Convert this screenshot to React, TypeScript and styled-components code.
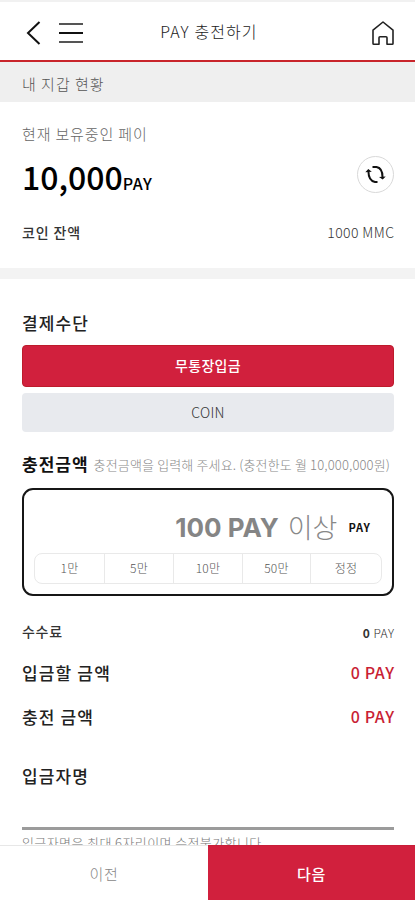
import React from 'react';
import styled, { createGlobalStyle } from 'styled-components';

const Global = createGlobalStyle`
  * { box-sizing: border-box; }
  body { margin: 0; background: #fff; }
  button { font: inherit; border: 0; padding: 0; margin: 0; background: none; color: inherit; }
`;

const Screen = styled.div`
  width: 415px;
  height: 900px;
  display: flex;
  flex-direction: column;
  overflow: hidden;
  background: #fff;
  color: #222;
  font-family: 'Noto Sans CJK KR', sans-serif;
`;

const Header = styled.header`
  flex: none;
  height: 62px;
  border-top: 2px solid #f1f1f1;
  border-bottom: 2px solid #c9252b;
  padding: 0 20px 0 26px;
  display: grid;
  grid-template-columns: 76px 1fr 76px;
  align-items: center;
`;

const HeaderIcons = styled.div<{ $end?: boolean }>`
  display: flex;
  align-items: center;
  gap: 18px;
  padding-top: 4px;
  justify-content: ${p => (p.$end ? 'flex-end' : 'flex-start')};
  svg { display: block; }
`;

const Text = styled.span<{ $size: number; $weight?: number; $color?: string; $spacing?: number }>`
  font-size: ${p => p.$size}px;
  font-weight: ${p => p.$weight ?? 400};
  color: ${p => p.$color ?? '#333'};
  letter-spacing: ${p => p.$spacing ?? 0}px;
  margin-right: ${p => -(p.$spacing ?? 0)}px;
  line-height: 1.2;
  white-space: nowrap;
`;

const Title = styled.h1`
  margin: 0;
  text-align: center;
  font-size: 16px;
  font-weight: 300;
  color: #222;
  letter-spacing: 1.1px;
  padding: 0 3px 1px 0;
`;

const SubHeader = styled.div`
  flex: none;
  height: 40px;
  padding: 3px 22px 0;
  display: flex;
  align-items: center;
  background: #efefef;
`;

const Main = styled.main`
  flex: 1;
  min-height: 0;
  overflow: hidden;
`;

const Wallet = styled.section`
  height: 177px;
  padding: 22px 21px 0 22px;
  border-bottom: 11px solid #f3f3f3;
`;

const Row = styled.div<{ $h: number }>`
  height: ${p => p.$h}px;
  display: flex;
  align-items: center;
  justify-content: space-between;
`;

const Balance = styled.div`
  display: flex;
  align-items: baseline;
  padding-bottom: 2px;
`;

const RefreshButton = styled.button`
  width: 37px;
  height: 37px;
  margin-top: -7px;
  border: 1px solid #d9d9d9;
  border-radius: 50%;
  display: flex;
  align-items: center;
  justify-content: center;
`;

const Form = styled.section`
  padding: 26px 21px 0 22px;
`;

const Method = styled.button<{ $active?: boolean }>`
  display: block;
  width: 100%;
  height: ${p => (p.$active ? 42 : 39)}px;
  border-radius: 4px;
  border: ${p => (p.$active ? '1px solid #bd1b2b' : '0')};
  background: ${p => (p.$active ? '#d1203d' : '#e8eaee')};
  color: ${p => (p.$active ? '#fff' : '#333')};
  font-size: 14px;
  font-weight: ${p => (p.$active ? 500 : 300)};
  letter-spacing: 0.3px;
  padding-bottom: 2px;
  margin-bottom: 6px;
`;

const AmountHeading = styled.div`
  height: 50px;
  padding-top: 3px;
  display: flex;
  align-items: center;
  gap: 6px;
`;

const AmountBox = styled.div`
  height: 108px;
  border: 2px solid #161616;
  border-radius: 11px;
  padding: 14px 10px 0;
`;

const AmountField = styled.div`
  height: 49px;
  padding: 0 12px 2px;
  display: flex;
  justify-content: flex-end;
  align-items: center;
  gap: 11px;
`;

const Placeholder = styled.div`
  display: flex;
  align-items: center;
  gap: 9px;
  color: #858585;
  height: 42px;
`;

const Latin = styled.span`
  font: 700 26px/1 Inter, sans-serif;
  padding-top: 1px;
`;

const Presets = styled.div`
  height: 31px;
  display: grid;
  grid-template-columns: 69px 69px 69px 68px 1fr;
  border: 1px solid #e9e9e9;
  border-radius: 8px;
`;

const Preset = styled.button`
  font-size: 12px;
  font-weight: 300;
  color: #555;
  padding-bottom: 2px;
  letter-spacing: 0.2px;
  & + & { border-left: 1px solid #e9e9e9; }
`;

const NameInput = styled.div`
  height: 32px;
  border-bottom: 3px solid #9b9b9b;
`;

const Note = styled.p`
  margin: 2px 0 0;
  font-size: 13px;
  line-height: 22px;
  font-weight: 300;
  letter-spacing: 0.4px;
  color: #777;
`;

const Footer = styled.footer`
  flex: none;
  height: 55px;
  display: grid;
  grid-template-columns: 208px 1fr;
`;

const FooterButton = styled.button<{ $primary?: boolean }>`
  font-size: 15px;
  letter-spacing: 0.8px;
  font-weight: ${p => (p.$primary ? 500 : 300)};
  color: ${p => (p.$primary ? '#fff' : '#888')};
  background: ${p => (p.$primary ? '#d1203d' : '#fff')};
  border-top: 1px solid ${p => (p.$primary ? '#c81e38' : '#e7e7e7')};
`;

const BackIcon = () => (
  <svg width="15" height="24" viewBox="0 0 15 24" fill="none" stroke="#111" strokeWidth="2">
    <path d="M13.5 1 2 12l11.500 11" />
  </svg>
);

const MenuIcon = () => (
  <svg width="24" height="20" viewBox="0 0 24 20" fill="none" strokeWidth="2">
    <path d="M0 1h24M0 19h24" stroke="#555" />
    <path d="M0 10h24" stroke="#111" />
  </svg>
);

const HomeIcon = () => (
  <svg width="24" height="26" viewBox="0 0 24 26" fill="none" stroke="#222" strokeWidth="1.600" strokeLinejoin="round">
    <path d="M2 10.200 12 2l10 8.200v13.300q0 .8-.8.800h-5.200v-6.500q0-1-1-1h-6q-1 0-1 1v6.500H2.800q-.8 0-.8-.8z" />
  </svg>
);

const RefreshIcon = () => (
  <svg width="21" height="19" viewBox="0 0 21 19" fill="none" stroke="#111" strokeWidth="2">
    <path d="M7.500 2H11.500Q17.500 3 17.500 12" />
    <path d="M12.500 17H10Q3.500 15.500 3.500 7" />
    <path d="m14 12 3.700 2.600 3-3.100zM.3 7.300l3-3.300 3.500 2.800z" fill="#111" stroke="none" />
  </svg>
);

const presets = ['1만', '5만', '10만', '50만', '정정'];

export default function App() {
  return (
    <Screen>
      <Global />
      <Header>
        <HeaderIcons>
          <BackIcon />
          <MenuIcon />
        </HeaderIcons>
        <Title>PAY 충전하기</Title>
        <HeaderIcons $end>
          <HomeIcon />
        </HeaderIcons>
      </Header>
      <SubHeader>
        <Text $size={15} $weight={300} $spacing={1} $color="#555">내 지갑 현황</Text>
      </SubHeader>
      <Main>
        <Wallet>
          <Row $h={20}>
            <Text $size={15} $weight={300} $spacing={0.85} $color="#666">현재 보유중인 페이</Text>
          </Row>
          <Row $h={67}>
            <Balance>
              <Text $size={32} $weight={500} $color="#000">10,000</Text>
              <Text $size={16} $weight={500} $spacing={0.6} $color="#000">PAY</Text>
            </Balance>
            <RefreshButton aria-label="새로고침"><RefreshIcon /></RefreshButton>
          </Row>
          <Row $h={42}>
            <Text $size={14} $weight={500} $spacing={0.85}>코인 잔액</Text>
            <Text $size={14} $weight={300} $spacing={0.4}>1000 MMC</Text>
          </Row>
        </Wallet>
        <Form>
          <Row $h={36}>
            <Text $size={17} $weight={500} $spacing={1.1} $color="#222">결제수단</Text>
          </Row>
          <Row $h={4} />
          <Method $active>무통장입금</Method>
          <Method>COIN</Method>
          <AmountHeading>
            <Text $size={17} $weight={700} $spacing={1} $color="#111">충전금액</Text>
            <Text $size={13} $weight={300} $spacing={0.15} $color="#888">충전금액을 입력해 주세요. (충전한도 월 10,000,000원)</Text>
          </AmountHeading>
          <AmountBox>
            <AmountField>
              <Placeholder>
                <Latin>100 PAY</Latin>
                <Text $size={27} $weight={300} $color="#888">이상</Text>
              </Placeholder>
              <Text $size={11} $weight={700} $spacing={0.8} $color="#111">PAY</Text>
            </AmountField>
            <Presets>
              {presets.map(p => <Preset key={p}>{p}</Preset>)}
            </Presets>
          </AmountBox>
          <Row $h={70}>
            <Text $size={14} $weight={500} $spacing={0.7}>수수료</Text>
            <span>
              <Text $size={12} $weight={700} $spacing={0.7}>0 </Text>
              <Text $size={12} $weight={300} $spacing={0.5}>PAY</Text>
            </span>
          </Row>
          <Row $h={14}>
            <Text $size={17} $weight={500} $spacing={1.15} $color="#222">입금할 금액</Text>
            <Text $size={16} $weight={500} $spacing={0.6} $color="#c91f35">0 PAY</Text>
          </Row>
          <Row $h={74}>
            <Text $size={17} $weight={500} $spacing={1.15} $color="#222">충전 금액</Text>
            <Text $size={16} $weight={500} $spacing={0.6} $color="#c91f35">0 PAY</Text>
          </Row>
          <Row $h={44}>
            <Text $size={17} $weight={500} $spacing={1.1} $color="#222">입금자명</Text>
          </Row>
          <NameInput />
          <Note>입금자명은 최대 6자리이며 수정불가합니다.</Note>
        </Form>
      </Main>
      <Footer>
        <FooterButton>이전</FooterButton>
        <FooterButton $primary>다음</FooterButton>
      </Footer>
    </Screen>
  );
}
